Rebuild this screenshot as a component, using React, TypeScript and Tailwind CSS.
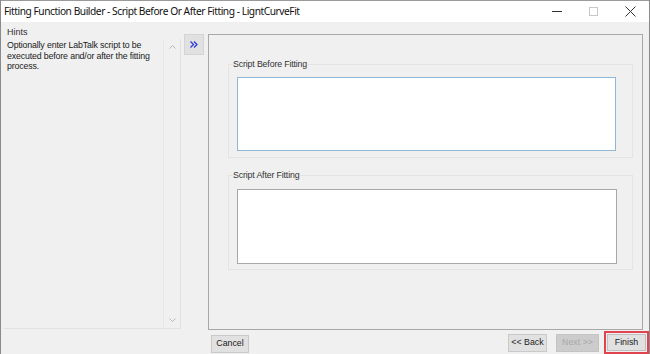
import React from "react";

export default function App() {
  const ui = { fontFamily: '"Liberation Sans", Arial, sans-serif' };
  return (
    <div className="w-[650px] h-[354px] bg-[#f0f0f0] border-x border-[#8a8a8a] flex flex-col overflow-hidden text-[#000]" style={ui}>
      {/* title bar */}
      <div className="h-[22px] bg-white flex items-center shrink-0 border-t border-[#9a9a9a]">
        <div className="pl-[3px] text-[10.2px] tracking-[-0.45px] text-[#111] flex-1 whitespace-nowrap" style={{ fontFamily: '"Noto Sans", sans-serif' }}>
          Fitting Function Builder - Script Before Or After Fitting - LigntCurveFit
        </div>
        <div className="flex items-center h-full">
          <div className="w-[36px] h-full flex items-center justify-center">
            <div className="w-[10px] h-px bg-[#333]" />
          </div>
          <div className="w-[36px] h-full flex items-center justify-center">
            <div className="w-[9px] h-[9px] border border-[#c8c8c8]" />
          </div>
          <div className="w-[38px] h-full flex items-center justify-center">
            <svg width="11" height="11" viewBox="0 0 11 11">
              <path d="M0.5 0.5 L10.5 10.5 M10.5 0.5 L0.5 10.5" stroke="#333" strokeWidth="1" />
            </svg>
          </div>
        </div>
      </div>

      {/* body */}
      <div className="flex-1 flex flex-col pl-[3px]">
        <div className="flex flex-1 pt-[5px]">
          {/* hints */}
          <div className="w-[177px] flex flex-col">
            <div className="text-[9px] text-[#333] pl-[3px] leading-[11px] h-[12px]">Hints</div>
            <div className="flex-1 flex border-b border-r border-[#e2e2e2] mb-[1px]">
              <div className="flex-1 pl-[3px] pt-[1px] text-[8.8px] leading-[10.5px] text-[#1a1a1a] tracking-[-0.15px]">
                Optionally enter LabTalk script to be executed before and/or after the fitting process.
              </div>
              <div className="w-[17px] border-l border-[#e6e6e6] flex flex-col items-center justify-between py-[6px]">
                <svg width="7" height="4" viewBox="0 0 7 4"><path d="M0.5 3.5 L3.5 0.5 L6.5 3.5" stroke="#b8b8b8" fill="none" /></svg>
                <svg width="7" height="4" viewBox="0 0 7 4"><path d="M0.5 0.5 L3.5 3.5 L6.5 0.5" stroke="#b8b8b8" fill="none" /></svg>
              </div>
            </div>
          </div>

          {/* toggle */}
          <div className="w-[27px] flex justify-start pl-[3px] pt-[7px]">
            <div className="w-[20px] h-[21px] bg-[#e1e1e1] border border-[#d4d4d4] flex items-center justify-center">
              <svg width="8" height="7" viewBox="0 0 8 7">
                <path d="M0.5 0.5 L3.5 3.5 L0.5 6.5 M4 0.5 L7 3.5 L4 6.5" stroke="#2b3bd8" strokeWidth="1.3" fill="none" />
              </svg>
            </div>
          </div>

          {/* main panel */}
          <div className="w-[435px] mt-[7px] border border-[#a8a8a8] bg-[#f0f0f0] flex flex-col pl-[19px] pr-[9px] pt-[29px] mb-[0px]">
            <div className="border border-[#e4e4e4] h-[94px] relative pl-[8px] pr-[16px] pt-[12px] pb-[6px] flex flex-col">
              <span className="absolute -top-[6px] left-[4px] text-[8.8px] leading-[10px] text-[#333] bg-[#f0f0f0] pr-[1px] tracking-[-0.15px]">Script Before Fitting</span>
              <div className="flex-1 bg-white border border-[#8fb8d8]" />
            </div>
            <div className="border border-[#e4e4e4] h-[95px] relative pl-[8px] pr-[15px] pt-[13px] pb-[5px] flex flex-col mt-[17px]">
              <span className="absolute -top-[6px] left-[4px] text-[8.8px] leading-[10px] text-[#333] bg-[#f0f0f0] pr-[1px] tracking-[-0.15px]">Script After Fitting</span>
              <div className="flex-1 bg-white border border-[#a8a8a8]" />
            </div>
          </div>
        </div>

        {/* bottom buttons */}
        <div className="h-[24px] flex items-center shrink-0">
          <div className="w-[207px]" />
          <div className="w-[38px] h-[18px] bg-[#e1e1e1] border border-[#c9c9c9] flex items-center justify-center text-[8.8px] text-[#222] mt-[3px]">Cancel</div>
          <div className="flex-1" />
          <div className="w-[39px] h-[18px] bg-[#e1e1e1] border border-[#c9c9c9] flex items-center justify-center text-[8.8px] text-[#222] mt-[2px]">&lt;&lt; Back</div>
          <div className="w-[43px] h-[18px] bg-[#cccccc] border border-[#c4c4c4] flex items-center justify-center text-[8.8px] text-[#a8a8a8] ml-[9px] mt-[2px]">Next &gt;&gt;</div>
          <div className="w-[45px] h-[23px] border-2 border-[#e0454f] flex items-center justify-center ml-[5px] self-end">
            <div className="w-[39px] h-[17px] bg-[#e1e1e1] border border-[#c0c0c0] flex items-center justify-center text-[8.8px] text-[#222]">Finish</div>
          </div>
        </div>
      </div>
    </div>
  );
}
